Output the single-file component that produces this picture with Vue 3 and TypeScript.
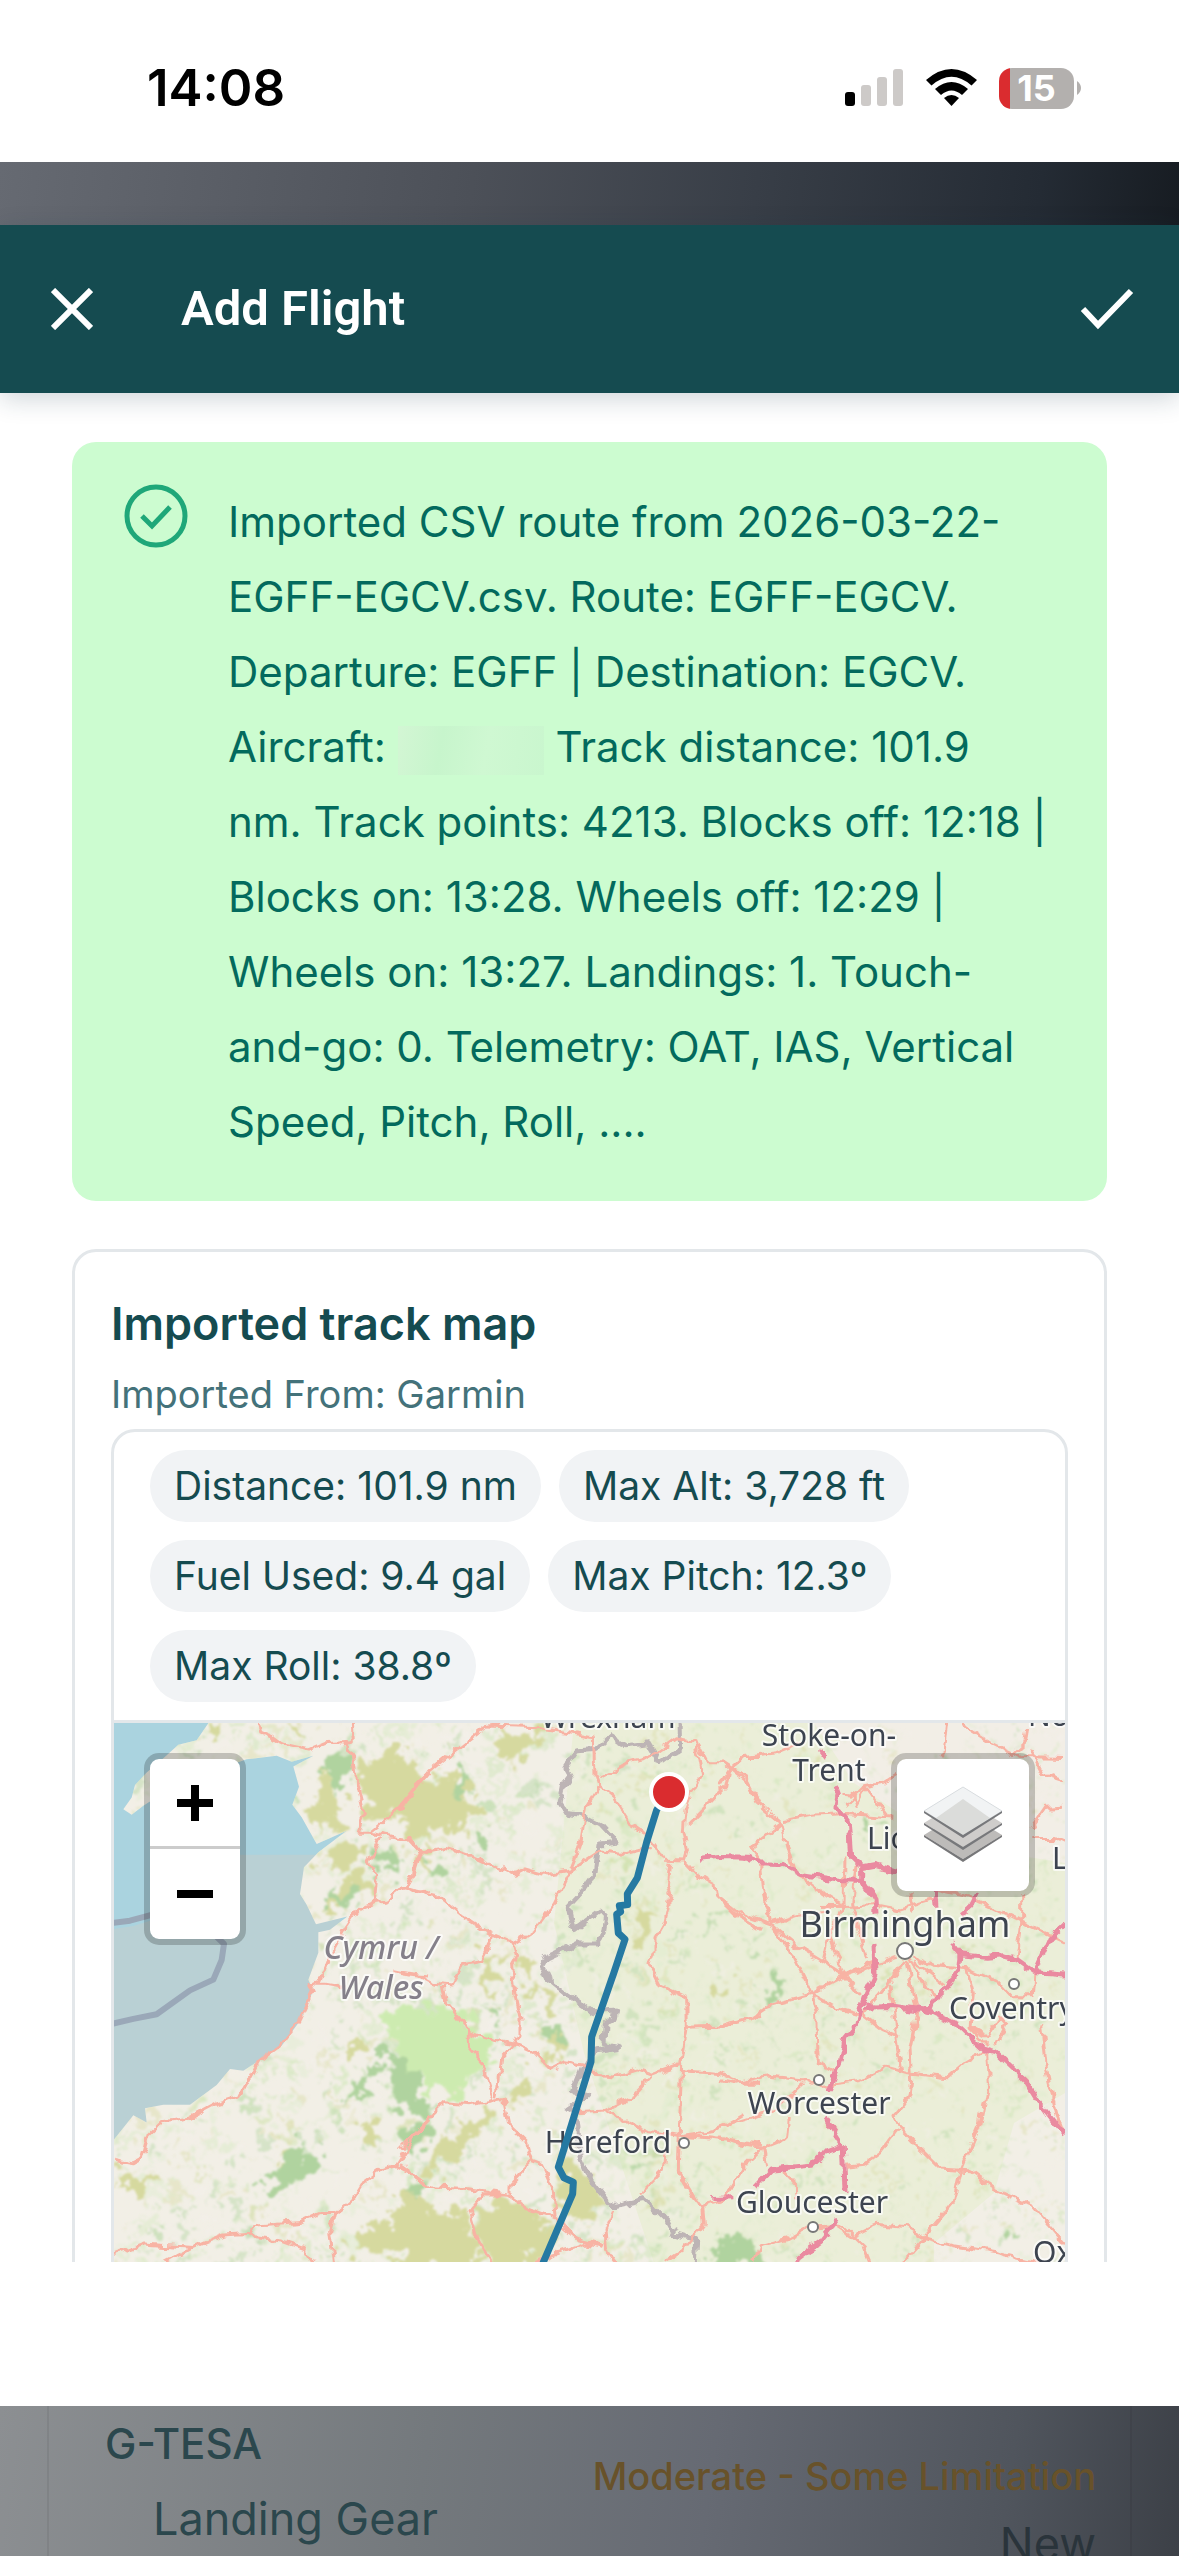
<script setup lang="ts">
interface Label {
  text: string
  x: number
  y: number
  size: number
  anchor: 'start' | 'middle'
}

interface Speck {
  x: number
  y: number
  rx: number
  ry: number
  fill: string
}

const summaryStart: string[] = [
  'Imported CSV route from 2026-03-22-',
  'EGFF-EGCV.csv. Route: EGFF-EGCV.',
  'Departure: EGFF | Destination: EGCV.',
]
const summaryEnd: string[] = [
  'nm. Track points: 4213. Blocks off: 12:18 |',
  'Blocks on: 13:28. Wheels off: 12:29 |',
  'Wheels on: 13:27. Landings: 1. Touch-',
  'and-go: 0. Telemetry: OAT, IAS, Vertical',
  'Speed, Pitch, Roll, ....',
]

const stats: string[] = [
  'Distance: 101.9 nm',
  'Max Alt: 3,728 ft',
  'Fuel Used: 9.4 gal',
  'Max Pitch: 12.3º',
  'Max Roll: 38.8º',
]

const labels: Label[] = [
  { text: 'Wrexham', x: 494, y: 5, size: 30, anchor: 'middle' },
  { text: 'Stoke-on-', x: 715, y: 23, size: 30, anchor: 'middle' },
  { text: 'Trent', x: 715, y: 58, size: 30, anchor: 'middle' },
  { text: 'Nottingham', x: 914, y: 3, size: 30, anchor: 'start' },
  { text: 'Lichfield', x: 753, y: 126, size: 30, anchor: 'start' },
  { text: 'Leicester', x: 938, y: 146, size: 30, anchor: 'start' },
  { text: 'Birmingham', x: 791, y: 214, size: 36, anchor: 'middle' },
  { text: 'Coventry', x: 835, y: 296, size: 30, anchor: 'start' },
  { text: 'Worcester', x: 705, y: 391, size: 30, anchor: 'middle' },
  { text: 'Gloucester', x: 698, y: 490, size: 30, anchor: 'middle' },
  { text: 'Hereford', x: 494, y: 430, size: 30, anchor: 'middle' },
  { text: 'Oxford', x: 919, y: 540, size: 30, anchor: 'start' },
]

const towns: { x: number; y: number; r: number }[] = [
  { x: 791, y: 228, r: 8 },
  { x: 900, y: 261, r: 5 },
  { x: 705, y: 357, r: 5 },
  { x: 699, y: 504, r: 5 },
  { x: 570, y: 420, r: 5 },
]

// Seeded generator, so that the ground cover is the same on every load.
function seeded(seed: number): () => number {
  let s = seed
  return () => {
    s = (s * 16807) % 2147483647
    return s / 2147483647
  }
}

const rand = seeded(4213)
const cover = ['#c4e2ab', '#d5e9bd', '#add29b', '#d6d99f', '#dcecca', '#f5f1ec']
const specks: Speck[] = Array.from({ length: 2600 }, () => {
  const x = Math.round(rand() * 951)
  const east = x > 560
  return {
    x,
    y: Math.round(rand() * 560),
    rx: Math.round(1 + rand() * (east ? 4 : 9)),
    ry: Math.round(1 + rand() * (east ? 4 : 7)),
    fill: cover[Math.floor(rand() * cover.length)],
  }
})

const heathWest: string[] = [
  'M320 40 L375 45 L350 75 L290 90Z',
  'M560 40 L615 40 L600 75 L575 60Z',
  'M785 150 L900 120 L985 180 L960 240 L880 300 L800 290 L770 210Z',
  'M915 300 L990 220 L990 390 L940 340Z',
  'M650 190 L680 180 L740 260 L700 330 L655 360 L640 290Z',
  'M655 400 L720 370 L790 385 L770 440 L700 450Z',
  'M680 540 L740 480 L800 440 L830 470 L760 530 L700 560Z',
  'M760 1170 L820 1150 L855 1180 L830 1215 L780 1205Z',
  'M740 950 L775 935 L780 955 L750 985Z',
  'M730 1500 L790 1450 L880 1420 L930 1340 L990 1380 L990 1520 L830 1510Z',
  'M42 1310 L100 1300 L150 1320 L110 1350 L50 1340Z',
  'M540 1250 L590 1230 L600 1270 L550 1310Z',
]
const woodWest: string[] = [
  'M680 130 L730 110 L755 170 L720 220 L680 190Z',
  'M490 1330 L530 1290 L590 1210 L660 1270 L640 1310 L560 1340 L510 1370Z',
  'M820 400 L870 380 L915 430 L880 465 L830 450Z',
  'M820 960 L900 970 L950 1080 L990 1100 L990 1150 L900 1110 L840 1010Z',
  'M700 480 L770 530 L740 560 L690 520Z',
  'M720 1110 L780 1050 L830 1020 L800 1080Z',
  'M900 1190 L985 1140 L990 1200 L930 1250Z',
]
const heathMid: string[] = [
  'M310 60 L390 70 L440 40 L450 60 L390 120 L330 150 L290 120Z',
  'M0 280 L80 200 L150 170 L200 220 L240 270 L190 330 L120 320 L60 370 L0 350Z',
  'M60 400 L90 410 L80 480 L60 460Z',
  'M720 570 L770 570 L740 640 L715 640Z',
  'M350 730 L400 700 L410 720 L360 750Z',
  'M390 770 L470 780 L460 840 L420 820Z',
  'M250 680 L290 690 L280 790 L255 760Z',
  'M425 930 L490 920 L500 960 L440 980Z',
  'M330 1060 L400 1020 L390 1080 L330 1110Z',
  'M75 1290 L140 1190 L280 1110 L290 1140 L210 1210 L160 1260 L90 1320Z',
  'M470 1280 L520 1250 L580 1320 L600 1400 L560 1430 L480 1390Z',
  'M0 1350 L80 1380 L180 1410 L220 1460 L240 1568 L0 1568Z',
  'M230 1400 L330 1370 L400 1410 L460 1440 L440 1520 L330 1568 L250 1568Z',
  'M930 770 L985 780 L960 810 L940 800Z',
]
const woodMid: string[] = [
  'M150 190 L200 170 L210 210 L170 220Z',
  'M210 360 L260 340 L265 380 L220 390Z',
  'M80 430 L150 420 L160 470 L110 490Z',
  'M440 920 L480 890 L510 930 L470 940Z',
  'M0 960 L50 1010 L60 1090 L0 1120Z',
  'M40 1310 L70 1300 L60 1350 L20 1370Z',
  'M250 840 L310 850 L290 890Z',
  'M940 1500 L1000 1460 L1060 1490 L1080 1568 L950 1568Z',
]
const parks: string[] = [
  'M850 870 L990 820 L1120 880 L1180 960 L1080 1070 L990 1060 L930 1010 L900 950Z',
]

const roadsWest: string[] = [
  'M478 36 L485 62 L520 75 L550 95 L630 112 L680 92 L735 88 L760 125 L770 200 L793 290 L775 342 L810 342 L840 320 L900 270 L950 210 L990 172',
  'M757 36 L760 90 L725 95',
  'M810 340 L850 350 L920 360 L955 395 L940 440 L935 480 L860 535 L822 540 L775 560 L735 615 L690 690 L665 750 L630 765 L640 790 L600 870 L540 940 L475 985 L420 1080 L350 1100 L270 1140 L190 1150 L145 1190 L125 1255 L100 1268 L42 1258',
  'M840 355 L805 425 L830 465 L822 540',
  'M915 495 L945 512 L990 505',
  'M955 400 L990 402',
  'M640 765 L680 765 L740 775',
  'M42 1525 L130 1495 L280 1505 L370 1470 L450 1465 L470 1445 L600 1435 L660 1410 L705 1410 L760 1370 L790 1325 L850 1285 L890 1275 L940 1200 L990 1150',
  'M200 1546 L280 1505',
  'M450 1465 L460 1475 L550 1485 L610 1505 L640 1546',
  'M705 1410 L692 1460 L705 1560',
  'M885 1275 L930 1295 L990 1335',
  'M880 730 L930 740 L990 745',
]
const roadsMid: string[] = [
  'M0 280 L90 170 L190 95 L260 45 L300 36',
  'M260 45 L420 50 L580 75 L585 180 L597 212 L560 270 L540 380 L510 450 L460 545 L400 620 L340 655 L275 630 L190 580 L110 520 L40 505 L0 495',
  'M0 360 L30 360 L60 400 L140 388 L220 410 L345 460 L375 445 L440 462 L510 450 L600 395 L680 402 L755 385',
  'M60 400 L40 460 L15 500',
  'M597 187 L680 150 L740 135 L830 75 L885 85 L905 180 L880 220 L855 280 L850 340 L862 395 L855 420 L795 418',
  'M597 212 L640 245 L690 320 L740 350 L770 385 L790 418',
  'M895 100 L920 145 L965 145 L1040 190 L1080 260',
  'M990 165 L980 210 L920 270 L862 325',
  'M990 165 L1030 133 L1080 133',
  'M810 425 L802 490 L812 520 L795 590 L765 640 L765 680 L750 715 L780 770 L860 805 L862 885 L845 990 L838 1180 L835 1290 L880 1360 L905 1390 L910 1440 L850 1510 L790 1546',
  'M855 425 L890 460 L945 490 L950 520 L1010 575 L1080 615',
  'M862 888 L960 885 L1080 855',
  'M275 630 L262 670 L245 700 L190 710 L155 770 L100 765 L50 740 L0 735',
  'M340 655 L350 690 L335 715 L345 800 L360 860 L360 905 L345 935 L305 975 L290 1085',
  'M130 775 L140 820 L205 900 L205 940 L245 985 L280 1085',
  'M205 905 L260 920 L345 935 L405 960 L450 1005 L490 985 L550 995 L585 1020 L640 1025 L710 1005 L755 1020 L840 990',
  'M845 1010 L960 1018 L1030 1045 L1080 1045',
  'M755 1025 L700 1080 L615 1120 L530 1125',
  'M615 1120 L680 1155 L740 1180 L830 1190 L900 1195 L1080 1215',
  'M850 1190 L940 1180 L1030 1130',
  'M0 1230 L70 1160 L135 1100 L210 1105 L310 1088 L325 1160 L380 1210 L395 1265 L425 1275 L460 1345 L465 1420 L490 1450 L530 1480 L610 1500',
  'M0 1275 L90 1335 L200 1340 L320 1355 L380 1395 L460 1420',
  'M395 1265 L330 1330 L330 1355',
  'M320 1355 L250 1355 L210 1400 L230 1470 L270 1546',
  'M640 1400 L615 1460 L620 1510 L650 1550',
  'M400 1546 L480 1520 L560 1495 L610 1505',
  'M905 1390 L970 1375 L1030 1280 L1080 1235',
  'M795 1240 L790 1290 L715 1360',
]
const roadsEast: string[] = [
  'M0 140 L30 165 L90 210 L110 260 L185 320 L220 440',
  'M0 210 L30 165 L70 130 L170 120 L250 90',
  'M185 320 L95 385 L125 430 L130 500 L155 600 L230 660 L300 700 L370 740 L420 800',
  'M190 310 L270 295 L380 290 L520 300',
  'M380 265 L435 215 L490 205 L530 180',
  'M370 235 L400 240 L410 270 L440 220 L500 295',
  'M210 440 L290 500 L375 550 L460 545 L540 560 L640 530',
  'M375 410 L372 550 L330 620 L370 745 L440 715 L530 690',
  'M410 420 L395 540 L440 700',
  'M0 525 L60 570 L150 600 L235 575 L330 565',
  'M155 605 L210 670 L275 795 L365 750 L470 715',
  'M275 795 L290 850 L295 990 L350 1015 L330 1060',
  'M0 885 L90 865 L155 825 L275 795 L350 835 L430 855 L485 895 L540 915',
  'M555 700 L500 770 L430 850',
  'M560 700 L575 770 L590 850 L570 950 L575 1040 L570 1080 L525 1130 L540 1170 L600 1230 L660 1285 L750 1290 L830 1345 L940 1390 L1035 1495',
  'M570 695 L620 780 L650 800',
  'M580 690 L640 715 L750 725 L830 760 L870 800 L940 800 L945 735',
  'M585 705 L670 770',
  'M510 770 L525 880 L545 1010',
  'M740 725 L760 790 L750 890 L800 940',
  'M0 1035 L50 1045 L140 1025 L250 1035 L300 1055 L420 1040 L500 1000 L560 1015 L680 1030 L730 990 L795 955',
  'M255 1045 L180 1110 L90 1140 L0 1165',
  'M800 960 L805 1040 L780 1160 L720 1290 L700 1380 L610 1480 L550 1546',
  'M535 1175 L480 1240 L430 1275 L380 1280',
  'M0 1195 L60 1215 L130 1225 L140 1275',
  'M130 1225 L70 1280 L20 1360',
  'M205 1140 L200 1200 L120 1230',
  'M190 1290 L230 1330 L230 1370',
  'M300 1450 L370 1445 L430 1500 L450 1546',
  'M350 1450 L390 1475 L470 1440 L560 1450 L620 1480 L700 1500 L830 1520 L960 1550',
  'M100 1546 L120 1500 L200 1480 L260 1450',
  'M680 36 L668 130',
  'M725 40 L820 95 L900 130 L1035 133',
  'M920 50 L915 90 L870 130',
  'M930 110 L970 180 L1035 200',
  'M935 330 L975 275 L1035 272',
  'M940 360 L1000 360 L1035 375',
  'M640 500 L740 520 L830 560 L920 600 L1035 650',
  'M905 510 L905 600 L890 700',
  'M965 880 L980 1010 L1010 1130 L1030 1180',
  'M830 940 L860 880 L840 860 L800 915 L750 890',
  'M370 550 L300 550',
  'M325 640 L310 700',
  'M570 510 L575 570',
]
const motorways: string[] = [
  'M-60 415 L0 410 L80 412 L120 428 L180 430 L240 460 L370 478 L430 480 L465 530 L468 570',
  'M300 110 L320 135 M345 210 L355 235 L348 270 L385 310 L392 410 L425 440 L425 480',
  'M425 442 L465 435 L530 452',
  'M643 500 L648 545 M770 515 L750 550 L722 572',
  'M462 655 L465 740 L435 800 L410 880 L375 920 L360 990 L325 1070',
  'M435 832 L520 830 L630 845 L710 880 L790 950 L830 960 L920 1040 L960 1100 L1035 1190',
  'M690 650 L720 685 L715 730 L680 775 L650 800 L632 845',
  'M718 685 L800 692 L850 688 L890 698 L945 735 L1035 742',
  'M945 735 L990 640 L1035 600',
  'M318 1145 L370 1220 L375 1350',
  'M365 1222 L310 1240 L270 1275 L155 1285 L105 1335',
  'M355 1425 L300 1490 L235 1535 L225 1560',
  'M-20 1368 L40 1366',
]
</script>

<template>
  <div class="screen">
    <header class="status">
      <time class="clock">14:08</time>
      <div class="indicators">
        <svg class="signal" viewBox="0 0 58 38" aria-label="Signal">
          <rect x="0" y="23" width="10" height="14" rx="3" fill="#000" />
          <rect x="16" y="16" width="10" height="21" rx="3" fill="#cdcac8" />
          <rect x="32" y="8" width="10" height="29" rx="3" fill="#cdcac8" />
          <rect x="48" y="0" width="10" height="37" rx="3" fill="#cdcac8" />
        </svg>
        <svg class="wifi" viewBox="0 0 102 76" aria-label="Wi-Fi">
          <path d="M0 22 Q51 -22 102 22 L91 33 Q51 -2 11 33Z" />
          <path d="M18 40 Q51 12 84 40 L72 52 Q51 34 30 52Z" />
          <path d="M36 58 Q51 46 66 58 L51 74Z" />
        </svg>
        <div class="battery"><span>15</span></div>
        <svg class="nub" viewBox="0 0 4 14" aria-hidden="true">
          <path d="M0 0 Q4 3 4 7 Q4 11 0 14Z" fill="#b3b0ae" />
        </svg>
      </div>
    </header>

    <div class="backdrop-top"></div>

    <main class="sheet">
      <div class="toolbar">
        <button class="icon-button" type="button" aria-label="Close">
          <svg viewBox="0 0 42 42"><path d="M2 2 L40 40 M40 2 L2 40" /></svg>
        </button>
        <h1>Add Flight</h1>
        <button class="icon-button confirm" type="button" aria-label="Save">
          <svg viewBox="0 0 54 42"><path d="M3 21 L18 37 L51 3" /></svg>
        </button>
      </div>

      <div class="content">
        <section class="alert" role="status">
          <svg class="alert-icon" viewBox="0 0 64 64" aria-hidden="true">
            <circle cx="32" cy="32" r="29" />
            <path d="M18 32 L28 42 L46 23" />
          </svg>
          <p>
            <span v-for="line in summaryStart" :key="line" class="line">{{ line }}</span>
            <span class="line">Aircraft: <i class="redacted"></i> Track distance: 101.9</span>
            <span v-for="line in summaryEnd" :key="line" class="line">{{ line }}</span>
          </p>
        </section>

        <section class="card">
          <h2>Imported track map</h2>
          <p class="source">Imported From: Garmin</p>
          <div class="panel">
            <ul class="stats">
              <li v-for="stat in stats" :key="stat">{{ stat }}</li>
            </ul>
            <div class="map">
              <svg
                class="tiles"
                viewBox="0 0 951 600"
                preserveAspectRatio="xMinYMin slice"
                role="img"
                aria-label="Imported track"
              >
                <defs>
                  <clipPath id="land">
                    <path
                      transform="translate(-14 -13) scale(0.33333 0.35714)"
                      d="M330 30 L290 85 L235 97 L190 135 L140 175 L105 210 L95 245 L70 278 L95 293 L130 268 L160 250 L250 200 L440 138 L530 128 L575 145 L640 128 L580 158 L597 215 L577 265 L605 300 L650 375 L740 338 L655 398 L612 440 L600 515 L620 545 L648 600 L742 578 L690 615 L655 622 L655 680 L625 755 L640 785 L600 870 L545 940 L480 980 L430 1010 L390 1005 L350 1050 L270 1105 L190 1105 L135 1115 L140 1155 L100 1135 L40 1205 L40 1750 L2900 1750 L2900 30Z"
                    />
                  </clipPath>
                  <filter id="cover" filterUnits="userSpaceOnUse" x="0" y="0" width="951" height="600">
                    <feTurbulence type="fractalNoise" baseFrequency="0.06" numOctaves="4" seed="7" result="noise" />
                    <feDisplacementMap
                      in="SourceGraphic"
                      in2="noise"
                      scale="48"
                      xChannelSelector="R"
                      yChannelSelector="G"
                    />
                    <feGaussianBlur stdDeviation="1" />
                  </filter>
                  <filter id="winding" filterUnits="userSpaceOnUse" x="0" y="0" width="951" height="600">
                    <feTurbulence type="fractalNoise" baseFrequency="0.09" numOctaves="2" seed="3" result="noise" />
                    <feDisplacementMap
                      in="SourceGraphic"
                      in2="noise"
                      scale="10"
                      xChannelSelector="R"
                      yChannelSelector="G"
                    />
                  </filter>
                </defs>
                <rect width="951" height="600" fill="#aad3df" />
                <g transform="translate(-14 -13) scale(0.33333 0.35714)">
                  <path d="M150 405 H720 V1300 H30 V615 L100 605 L150 590Z" fill="#b9d0d4" />
                  <path
                    class="sea-line"
                    d="M30 597 L90 590 L160 572 M350 635 L372 655 L365 700 L340 755 L270 785 L170 852 L100 865 L30 880"
                  />
                </g>
                <g clip-path="url(#land)">
                  <rect width="951" height="600" fill="#f2efe6" />
                  <path d="M460 0 H951 V600 H560 L520 480 L470 330 L440 200Z" fill="#ebeed8" />
                  <path d="M700 0 H951 V140 L830 120 L740 60Z" fill="#f2eee6" />
                  <path d="M951 370 L900 400 L880 470 L820 520 V600 H951Z" fill="#f2efe6" />
                  <g filter="url(#cover)">
                    <ellipse
                      v-for="(s, i) in specks"
                      :key="i"
                      :cx="s.x"
                      :cy="s.y"
                      :rx="s.rx"
                      :ry="s.ry"
                      :fill="s.fill"
                      opacity="0.4"
                    />
                    <g transform="translate(-14 -13) scale(0.33333 0.35714)">
                      <path v-for="d in parks" :key="d" :d="d" fill="#cdebb0" />
                      <path v-for="d in heathWest" :key="d" :d="d" fill="#d6d99f" />
                      <path v-for="d in woodWest" :key="d" :d="d" fill="#b0d39f" />
                    </g>
                    <g transform="translate(286 -13) scale(0.33333 0.35714)">
                      <path v-for="d in heathMid" :key="d" :d="d" fill="#d6d99f" />
                      <path v-for="d in woodMid" :key="d" :d="d" fill="#b0d39f" />
                    </g>
                    <g transform="translate(606 -13) scale(0.33333 0.35714)" fill="#b0d39f">
                      <path d="M0 1470 L50 1490 L70 1568 L0 1568Z" />
                      <path d="M130 770 L190 760 L195 800 L150 805Z" />
                      <path d="M435 300 L480 310 L485 330 L440 325Z" />
                      <path d="M860 1450 L890 1445 L885 1475Z" />
                    </g>
                  </g>
                </g>
                <g filter="url(#winding)">
                  <g class="border-line" transform="translate(286 -13) scale(0.33333 0.35714)">
                    <path
                      d="M840 30 L842 110 L782 150 L745 92 L680 100 L635 72 L590 110 L530 115 L495 165 L510 190 L490 215 L480 260 L500 290 L545 295 L605 325 L650 370 L597 375 L585 460 L555 500 L505 550 L520 615 L600 560 L620 580 L612 625 L590 655 L530 655 L440 695 L425 720 L440 750 L500 795 L580 845 L650 840 L645 865 L615 880 L612 935 L655 945 L585 955 L550 1000 L520 1070 L560 1080 L505 1115 L530 1130 L540 1250 L560 1295 L640 1390 L735 1370 L800 1430 L820 1465 L890 1485 L885 1560"
                    />
                  </g>
                  <g class="roads" transform="translate(-14 -13) scale(0.33333 0.35714)">
                    <path v-for="d in roadsWest" :key="d" :d="d" />
                  </g>
                  <g class="roads" transform="translate(286 -13) scale(0.33333 0.35714)">
                    <path v-for="d in roadsMid" :key="d" :d="d" />
                  </g>
                  <g class="roads" transform="translate(606 -13) scale(0.33333 0.35714)">
                    <path v-for="d in roadsEast" :key="d" :d="d" />
                    <path v-for="d in motorways" :key="d" :d="d" class="motorway" />
                  </g>
                </g>
                <g class="labels">
                  <circle v-for="t in towns" :key="t.x" :cx="t.x" :cy="t.y" :r="t.r" class="town" />
                  <text
                    v-for="l in labels"
                    :key="l.text"
                    :x="l.x"
                    :y="l.y"
                    :font-size="l.size"
                    :text-anchor="l.anchor"
                  >{{ l.text }}</text>
                  <g class="country">
                    <text x="267" y="236" font-size="32">Cymru /</text>
                    <text x="267" y="276" font-size="32">Wales</text>
                  </g>
                </g>
                <g transform="translate(286 -13) scale(0.33333 0.35714)">
                  <path
                    class="track"
                    d="M800 235 L770 280 L740 370 L712 470 L682 515 L683 545 L658 548 L662 565 L650 572 L655 625 L675 642 L640 740 L575 915 L573 985 L475 1280 L492 1310 L520 1322 L518 1355 L430 1546 L400 1620"
                  />
                </g>
                <circle cx="555" cy="69" r="18" fill="#da2c2f" stroke="#fff" stroke-width="4" />
              </svg>
              <div class="zoom">
                <button type="button" aria-label="Zoom in">
                  <svg viewBox="0 0 36 36"><path d="M0 18 H36 M18 0 V36" /></svg>
                </button>
                <button type="button" aria-label="Zoom out">
                  <svg viewBox="0 0 36 36"><path d="M0 18 H36" /></svg>
                </button>
              </div>
              <button class="layers" type="button" aria-label="Layers">
                <svg viewBox="0 0 78 78">
                  <path d="M0 49 L39 25 L78 49 L39 73Z" fill="#bdbbb9" />
                  <path d="M0 49 L39 73 L78 49 V51 L39 76 L0 51Z" fill="#777779" />
                  <path d="M0 37 L39 13 L78 37 L39 61Z" fill="#cfcdcb" />
                  <path d="M0 37 L39 61 L78 37 V39 L39 64 L0 39Z" fill="#77787b" />
                  <path d="M0 25 L39 1 L78 25 L39 49Z" fill="#f1f3f4" stroke="#d8dcdf" />
                  <path d="M12 32 L39 13 L66 32 L39 49Z" fill="#dbdcda" />
                  <path d="M0 25 L39 49 L78 25 V27 L39 52 L0 27Z" fill="#77787b" />
                </svg>
              </button>
            </div>
          </div>
        </section>
      </div>
    </main>

    <footer class="behind">
      <div class="behind-card">
        <div>
          <p class="registration">G-TESA</p>
          <p class="part">Landing Gear</p>
        </div>
        <div class="behind-right">
          <p class="severity">Moderate - Some Limitation</p>
          <p class="state">New</p>
        </div>
      </div>
    </footer>
  </div>
</template>

<style>
body {
  margin: 0;
  background: #fff;
}
</style>

<style scoped>
* {
  box-sizing: border-box;
}

h1,
h2,
p,
ul {
  margin: 0;
  padding: 0;
}

button {
  padding: 0;
  border: 0;
  background: none;
}

svg {
  display: block;
}

.screen {
  display: flex;
  flex-direction: column;
  height: 100vh;
  overflow: hidden;
  font-family: Inter, 'Open Sans', sans-serif;
  color: #154b50;
}

.status {
  display: flex;
  flex: none;
  align-items: center;
  justify-content: space-between;
  height: 162px;
  padding: 14px 98px 0 147px;
  background: #fff;
}

.clock {
  font-size: 51px;
  font-weight: 600;
  line-height: 60px;
  color: #000;
}

.indicators {
  display: flex;
  align-items: center;
}

.signal {
  width: 58px;
  height: 38px;
  margin-right: 23px;
}

.wifi {
  width: 51px;
  height: 38px;
  margin-right: 22px;
}

.battery {
  width: 75px;
  height: 41px;
  margin-right: 3px;
  border-radius: 13px;
  background: linear-gradient(90deg, #da2c2f 11px, #b3b0ae 11px);
  font-size: 36px;
  font-weight: 700;
  line-height: 41px;
  text-align: center;
  color: #fff;
}

.nub {
  width: 4px;
  height: 14px;
}

.backdrop-top {
  flex: none;
  height: 63px;
  background: linear-gradient(97deg, #666a72 0%, #4c5058 40%, #383e47 64%, #242b34 88%, #171c22 100%);
}

.sheet {
  display: flex;
  flex: 1;
  flex-direction: column;
  min-height: 0;
  padding-bottom: 144px;
  background: #fff;
}

.toolbar {
  position: relative;
  display: flex;
  flex: none;
  align-items: center;
  height: 168px;
  padding: 0 45px 0 51px;
  background: #154b50;
  box-shadow: 0 6px 24px rgba(21, 50, 70, 0.2);
  color: #fff;
}

.toolbar h1 {
  margin-left: 88px;
  font-family: Roboto, sans-serif;
  font-size: 49px;
  font-weight: 600;
  line-height: 60px;
}

.icon-button svg {
  width: 42px;
  height: 42px;
  fill: none;
  stroke: #fff;
  stroke-width: 6px;
}

.confirm {
  margin-left: auto;
}

.confirm svg {
  width: 54px;
}

.content {
  flex: 1;
  min-height: 0;
  padding: 49px 72px 0;
  overflow: hidden;
}

.alert {
  display: flex;
  gap: 40px;
  padding: 42px 40px 42px 52px;
  border-radius: 24px;
  background: #ccfcd0;
  color: #036a5d;
}

.alert-icon {
  flex: none;
  width: 64px;
  height: 64px;
  fill: none;
  stroke: #1fa779;
  stroke-width: 5px;
}

.alert p {
  font-size: 42px;
  line-height: 75px;
}

.line {
  display: block;
  white-space: nowrap;
}

.redacted {
  display: inline-block;
  width: 146px;
  height: 49px;
  vertical-align: middle;
  background: linear-gradient(100deg, #d3f6d4, #c7f5cc 30%, #cff8d2 60%, #c9f6ce);
}

.card {
  margin-top: 48px;
  padding: 36px;
  border: 3px solid #e3e7ea;
  border-radius: 24px;
}

.card h2 {
  font-size: 45px;
  font-weight: 600;
  line-height: 72px;
}

.source {
  font-size: 38px;
  line-height: 69px;
  color: #44727a;
}

.panel {
  border: 3px solid #e3e7ea;
  border-radius: 24px;
  overflow: hidden;
}

.stats {
  display: flex;
  flex-wrap: wrap;
  gap: 18px;
  padding: 18px 36px;
  border-bottom: 3px solid #e3e7ea;
  list-style: none;
}

.stats li {
  padding: 0 24px;
  border-radius: 36px;
  background: #f1f3f5;
  font-size: 39px;
  line-height: 72px;
}

.map {
  position: relative;
  height: 600px;
}

.tiles {
  width: 100%;
  height: 100%;
}

.sea-line,
.border-line path,
.roads path,
.track {
  fill: none;
  stroke-linejoin: round;
  vector-effect: non-scaling-stroke;
}

.sea-line {
  stroke: #9aa8b8;
  stroke-width: 6px;
}

.border-line path {
  stroke: #bdb4b5;
  stroke-width: 5px;
}

.roads path {
  stroke: #f8b3a4;
  stroke-width: 3px;
}

.roads .motorway {
  stroke: #ea8aa0;
  stroke-width: 5px;
}

.labels text {
  font-family: 'Noto Sans', sans-serif;
  fill: #3d4450;
  stroke: rgba(255, 255, 255, 0.7);
  stroke-width: 4px;
  stroke-linejoin: round;
  paint-order: stroke;
}

.labels .country text {
  font-style: italic;
  font-weight: 500;
  fill: #85808a;
  text-anchor: middle;
}

.town {
  fill: #fff;
  stroke: #777;
  stroke-width: 2px;
}

.track {
  stroke: #2579a2;
  stroke-width: 7px;
}

.zoom,
.layers {
  position: absolute;
  top: 30px;
  border: 6px solid rgba(0, 0, 0, 0.2);
  border-radius: 15px;
  background: #fff;
  background-clip: padding-box;
}

.zoom {
  left: 30px;
  width: 102px;
}

.zoom button {
  display: grid;
  place-items: center;
  width: 100%;
  height: 90px;
}

.zoom button:first-child {
  border-bottom: 3px solid #ccc;
}

.zoom svg {
  width: 36px;
  height: 36px;
  stroke: #000;
  stroke-width: 8px;
}

.layers {
  display: grid;
  right: 30px;
  place-items: center;
  width: 144px;
  height: 144px;
}

.layers svg {
  width: 78px;
  height: 78px;
}

.behind {
  flex: none;
  height: 150px;
  padding: 0 47px 0 3px;
  overflow: hidden;
  background: linear-gradient(98deg, #8c8f92 0%, #74797d 36%, #666a73 60%, #50555d 85%, #3c4047 100%);
}

.behind-card {
  display: flex;
  justify-content: space-between;
  margin-left: 44px;
  padding: 0 34px 0 56px;
  border-left: 2px solid rgba(0, 0, 0, 0.06);
  border-right: 2px solid rgba(0, 0, 0, 0.06);
  font-size: 42px;
  line-height: 75px;
  color: #2b474d;
}

.registration {
  font-weight: 500;
}

.part {
  padding-left: 48px;
  font-size: 45px;
}

.behind-right {
  padding-top: 33px;
  text-align: right;
}

.severity {
  font-size: 38px;
  font-weight: 500;
  color: #68522a;
}

.state {
  font-size: 45px;
  line-height: 60px;
  color: #2a343b;
}
</style>
